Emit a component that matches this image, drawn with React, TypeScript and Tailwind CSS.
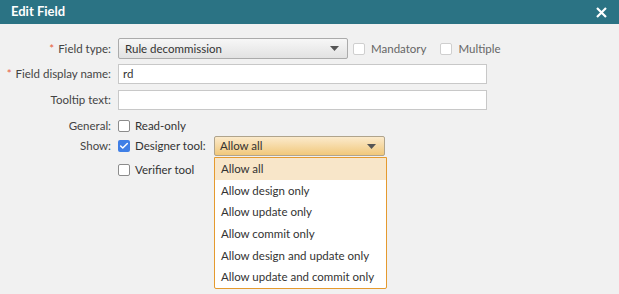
import { Check } from "lucide-react";

const options = [
  "Allow all",
  "Allow design only",
  "Allow update only",
  "Allow commit only",
  "Allow design and update only",
  "Allow update and commit only",
];

function Caret() {
  return (
    <svg width="9" height="5" viewBox="0 0 9 5" className="shrink-0">
      <path d="M0 0h9L4.5 5z" fill="#555" />
    </svg>
  );
}

function Box({ checked, faded }: { checked?: boolean; faded?: boolean }) {
  if (checked) {
    return (
      <span className="flex h-[12px] w-[12px] shrink-0 items-center justify-center rounded-[2px] bg-[#3f7fe6]">
        <Check className="h-[10px] w-[10px] text-white" strokeWidth={3.5} />
      </span>
    );
  }
  return (
    <span
      className={`h-[12px] w-[12px] shrink-0 rounded-[2px] border bg-white ${
        faded ? "border-[#cfcfcf]" : "border-[#8c8c8c]"
      }`}
    />
  );
}

function Label({ children, required }: { children: React.ReactNode; required?: boolean }) {
  return (
    <div className="flex w-[118px] shrink-0 items-center justify-end whitespace-nowrap pr-[7px] text-[#444]">
      {required && <span className="mr-[4px] text-[#e8603c]">*</span>}
      {children}
    </div>
  );
}

export default function App() {
  return (
    <div
      className="h-[294px] w-[619px] overflow-hidden whitespace-nowrap bg-[#f1f1f1] text-[11.5px] text-[#333]"
      style={{ fontFamily: 'Lato, "Open Sans", sans-serif' }}
    >
      {/* Title bar */}
      <div className="flex h-[24px] items-center justify-between bg-[#2b7384] pl-[11px] pr-[12px] text-white">
        <span className="text-[13px] font-bold">Edit Field</span>
        <svg width="11" height="11" viewBox="0 0 11 11">
          <path d="M1 1l9 9M10 1l-9 9" stroke="white" strokeWidth="2.2" />
        </svg>
      </div>

      <div className="flex flex-col pt-[14px]">
        <div className="flex h-[21px] items-center">
          <Label required>Field type:</Label>
          <div className="flex h-[21px] w-[230px] items-center justify-between rounded-[2px] border border-[#ababab] bg-gradient-to-b from-[#f7f7f7] to-[#e2e2e2] pl-[6px] pr-[8px]">
            <span>Rule decommission</span>
            <Caret />
          </div>
          <div className="ml-[5px] flex items-center gap-[6px] text-[#666]">
            <Box faded />
            <span>Mandatory</span>
            <span className="ml-[2px]" />
            <Box faded />
            <span>Multiple</span>
          </div>
        </div>

        <div className="mt-[5px] flex h-[20px] items-center">
          <Label required>Field display name:</Label>
          <div className="flex h-[20px] w-[369px] items-center border border-[#c8c8c8] bg-white px-[4px]">
            rd
          </div>
        </div>

        <div className="mt-[6px] flex h-[20px] items-center">
          <Label>Tooltip text:</Label>
          <div className="h-[20px] w-[369px] border border-[#c8c8c8] bg-white" />
        </div>

        <div className="mt-[9px] flex h-[14px] items-center">
          <Label>General:</Label>
          <Box />
          <span className="ml-[5px]">Read-only</span>
        </div>

        <div className="mt-[3px] flex h-[20px] items-start">
          <Label>
            <span className="leading-[20px]">Show:</span>
          </Label>
          <div className="flex flex-col">
            <div className="flex h-[20px] items-center">
              <Box checked />
              <span className="ml-[5px] w-[79px]">Designer tool:</span>
              <div className="relative">
                <div className="flex h-[20px] w-[171px] items-center justify-between rounded-[2px] border border-[#b0a48c] bg-gradient-to-b from-[#fbeacb] to-[#f1c87a] pl-[5px] pr-[8px]">
                  <span>Allow all</span>
                  <Caret />
                </div>
                <ul className="absolute left-0 top-[21px] z-10 w-[173px] rounded-b-[2px] border border-[#e59a2e] bg-white">
                  {options.map((o, i) => (
                    <li
                      key={o}
                      className={`flex h-[21.6px] items-center pl-[6px] ${i === 0 ? "bg-[#f8e6c9]" : ""}`}
                    >
                      {o}
                    </li>
                  ))}
                </ul>
              </div>
            </div>
            <div className="mt-[4px] flex h-[20px] items-center">
              <Box />
              <span className="ml-[5px]">Verifier tool</span>
            </div>
          </div>
        </div>
      </div>
    </div>
  );
}
